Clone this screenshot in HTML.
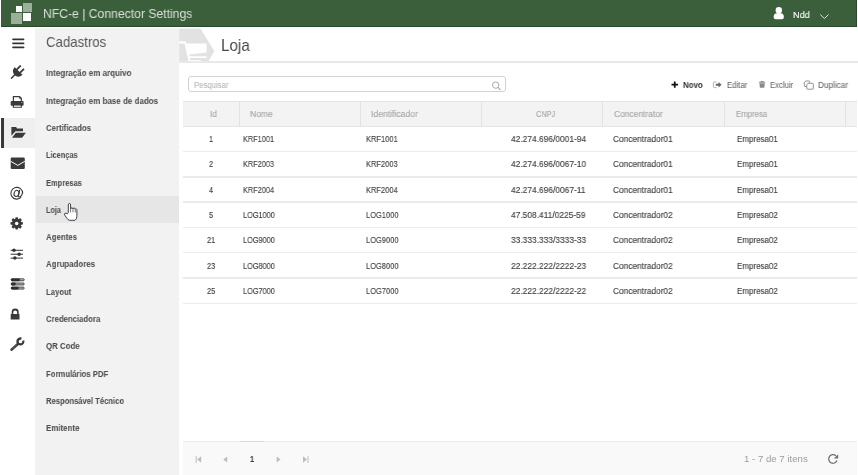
<!DOCTYPE html>
<html><head><meta charset="utf-8">
<style>
html,body{margin:0;padding:0;}
body{width:858px;height:475px;overflow:hidden;position:relative;background:#fff;font-family:"Liberation Sans",sans-serif;}
.a{position:absolute;}
.t{position:absolute;white-space:nowrap;transform-origin:0 0;will-change:transform;font-family:"Liberation Sans",sans-serif;}
svg{position:absolute;left:0;top:0;overflow:visible;}
</style></head><body>
<!-- header -->
<div class="a" style="left:1px;top:0;width:855px;height:26px;background:#3b5f3b;border-right:1px solid #2a4a2a;border-bottom:1px solid #27492a;"></div>
<div class="a" style="left:16px;top:6px;width:6px;height:6px;background:#fff;"></div>
<div class="a" style="left:23px;top:3px;width:9px;height:9px;background:#9bb09a;"></div>
<div class="a" style="left:11px;top:13px;width:11px;height:11px;background:#9bb09a;"></div>
<div class="a" style="left:23px;top:13px;width:8px;height:8px;background:#fff;"></div>

<!-- icon column / sidebar -->
<div class="a" style="left:35px;top:28px;width:144px;height:447px;background:#f2f2f2;"></div>
<div class="a" style="left:3.5px;top:118px;width:31.5px;height:30px;background:#efefef;"></div>
<div class="a" style="left:1px;top:118px;width:2.6px;height:30px;background:#3a3a3a;"></div>
<div class="a" style="left:36px;top:196px;width:142.8px;height:27px;background:#e6e6e6;"></div>

<!-- page header -->
<div class="a" style="left:179px;top:61.3px;width:679px;height:1.5px;background:#e8e8e8;"></div>

<!-- search -->
<div class="a" style="left:188px;top:76px;width:316px;height:14px;border:1px solid #d2d2d2;border-radius:3px;"></div>

<!-- table header -->
<div class="a" style="left:183px;top:101px;width:674px;height:24px;background:#f3f3f3;border-top:1px solid #e4e4e4;border-bottom:1px solid #e4e4e4;"></div>
<div class="a" style="left:238.5px;top:102px;width:1px;height:24px;background:#e2e2e2;"></div>
<div class="a" style="left:359.8px;top:102px;width:1px;height:24px;background:#e2e2e2;"></div>
<div class="a" style="left:481px;top:102px;width:1px;height:24px;background:#e2e2e2;"></div>
<div class="a" style="left:602.2px;top:102px;width:1px;height:24px;background:#e2e2e2;"></div>
<div class="a" style="left:724px;top:102px;width:1px;height:24px;background:#e2e2e2;"></div>
<div class="a" style="left:845.2px;top:102px;width:1px;height:24px;background:#e2e2e2;"></div>
<!-- row lines -->
<div class="a" style="left:183px;top:150.75px;width:674px;height:1.5px;background:#ebebeb;"></div>
<div class="a" style="left:183px;top:176.05px;width:674px;height:1.5px;background:#ebebeb;"></div>
<div class="a" style="left:183px;top:201.35px;width:674px;height:1.5px;background:#ebebeb;"></div>
<div class="a" style="left:183px;top:226.65px;width:674px;height:1.5px;background:#ebebeb;"></div>
<div class="a" style="left:183px;top:251.95px;width:674px;height:1.5px;background:#ebebeb;"></div>
<div class="a" style="left:183px;top:277.25px;width:674px;height:1.5px;background:#ebebeb;"></div>
<div class="a" style="left:183px;top:302.55px;width:674px;height:1.5px;background:#ebebeb;"></div>

<!-- footer -->
<div class="a" style="left:183px;top:440.7px;width:674px;height:35px;background:#f9f9f9;border-top:1px solid #ebebeb;"></div>
<div class="a" style="left:240px;top:440.7px;width:24px;height:1px;background:#e6d9a2;"></div>

<!--ICONS-->
<svg width="858" height="475" viewBox="0 0 858 475">
  <!-- page icon: hexagon with cart -->
  <polygon points="179.2,28.5 200.5,28.5 214.4,51.3 208.5,61 179.2,61" fill="#e2e2e2"/>
  <path d="M179.2,41.3 H185.6 L186.2,43.4 H206.6 V52.4 L189.2,54.6 L189.6,56.3 H206.6 V58.1 L189.9,58.1 L190.3,60.2 H201 V61.3 H188.6 L184.6,43.4 H179.2 Z" fill="#fff"/>
  <!-- user icon -->
  <circle cx="778.8" cy="10.3" r="3.2" fill="#fff"/>
  <path d="M773.7,17.5 V16.4 Q773.7,13 778.8,13 Q783.8,13 783.8,16.4 V17.5 Q783.8,19.3 782,19.3 H775.5 Q773.7,19.3 773.7,17.5 Z" fill="#fff"/>
  <path d="M820.3,14.6 L824.4,18.5 L828.5,14.6" stroke="#e8eee8" stroke-width="0.9" fill="none"/>

  <!-- hamburger -->
  <g fill="#333">
    <rect x="12.2" y="38.6" width="12.2" height="1.7" rx="0.8"/>
    <rect x="12.2" y="42.5" width="12.2" height="1.7" rx="0.8"/>
    <rect x="12.2" y="46.55" width="12.2" height="1.7" rx="0.8"/>
  </g>
  <!-- plug -->
  <g transform="translate(18.5,71.1) rotate(45)" fill="#3a3a3a">
    <path d="M-5.4,-0.2 H5.4 V0.6 A5.4,5 0 0 1 -5.4,0.6 Z"/>
    <rect x="-3.2" y="-5.6" width="1.8" height="5.8" rx="0.6"/>
    <rect x="1.4" y="-5.6" width="1.8" height="5.8" rx="0.6"/>
    <rect x="-0.75" y="4" width="1.5" height="6.6" rx="0.5"/>
  </g>
  <!-- printer -->
  <g fill="#3a3a3a">
    <path d="M12.8,96 H19.8 L21.9,98.1 V101.5 H20.7 V98.6 L19.3,97.2 H14 V101.5 H12.8 Z"/>
    <rect x="10.7" y="101" width="12.9" height="4.7" rx="1"/>
    <path d="M12.8,104 H21.9 V107.7 H12.8 Z M14,105.8 V106.6 H20.7 V105.8 Z" fill-rule="evenodd"/>
  </g>
  <rect x="14" y="105.6" width="6.7" height="1" fill="#fff"/>
  <path d="M19.3,96.5 L21.6,98.8 H19.3 Z" fill="#3a3a3a"/>
  <rect x="21.3" y="102" width="1" height="0.9" fill="#bbb"/>
  <!-- folder open -->
  <g fill="#3a3a3a">
    <path d="M11.4,127 H16.2 L17,128.6 H23 V131.2 H15.5 L11.4,135.7 Z"/>
    <path d="M15.8,132.8 H25.9 L22.1,137.8 H12 Z"/>
  </g>
  <!-- envelope -->
  <rect x="10.7" y="157.6" width="14.1" height="11.4" rx="1.2" fill="#3a3a3a"/>
  <path d="M10.7,161.3 L17.75,165.4 L24.8,161.3" stroke="#fff" stroke-width="1" fill="none"/>
  <!-- at -->
  <g fill="none" stroke="#3a3a3a">
    <path d="M21.2,197.2 A5.9,5.9 0 1 1 22.7,193.4" stroke-width="1.1"/>
    <path d="M19.7,189.8 L18.2,196.2 Q18.2,197 19.1,197 Q22,196.6 22.3,192.8" stroke-width="1.1"/>
    <ellipse cx="16.5" cy="193.4" rx="2.4" ry="3.1" transform="rotate(20 16.5 193.4)" stroke-width="1.1"/>
  </g>
  <!-- gear -->
  <g transform="translate(16.7,223.4)" fill="#3a3a3a">
    <circle r="4.7"/>
    <rect x="-1.4" y="-6.2" width="2.8" height="3" rx="0.8" transform="rotate(0)"/>
    <rect x="-1.4" y="-6.2" width="2.8" height="3" rx="0.8" transform="rotate(45)"/>
    <rect x="-1.4" y="-6.2" width="2.8" height="3" rx="0.8" transform="rotate(90)"/>
    <rect x="-1.4" y="-6.2" width="2.8" height="3" rx="0.8" transform="rotate(135)"/>
    <rect x="-1.4" y="-6.2" width="2.8" height="3" rx="0.8" transform="rotate(180)"/>
    <rect x="-1.4" y="-6.2" width="2.8" height="3" rx="0.8" transform="rotate(225)"/>
    <rect x="-1.4" y="-6.2" width="2.8" height="3" rx="0.8" transform="rotate(270)"/>
    <rect x="-1.4" y="-6.2" width="2.8" height="3" rx="0.8" transform="rotate(315)"/>
    <circle r="1.75" fill="#fff"/>
  </g>
  <!-- sliders -->
  <g fill="#333">
    <rect x="10.6" y="249.8" width="12.4" height="1"/>
    <rect x="10.6" y="253.7" width="12.4" height="1"/>
    <rect x="10.6" y="257.6" width="12.4" height="1"/>
    <circle cx="14" cy="250.3" r="1.75"/>
    <circle cx="19.1" cy="254.2" r="1.75"/>
    <circle cx="14.9" cy="258.1" r="1.75"/>
  </g>
  <!-- server / bars -->
  <g stroke="#333" stroke-width="0.9">
    <rect x="11.25" y="278.85" width="13" height="1.9" rx="0.95" fill="#c8c8c8"/>
    <rect x="11.25" y="283.05" width="13" height="1.9" rx="0.95" fill="#c8c8c8"/>
    <rect x="11.25" y="287.15" width="13" height="1.9" rx="0.95" fill="#c8c8c8"/>
  </g>
  <g fill="#2e2e2e">
    <rect x="10.8" y="278.4" width="9.2" height="2.8" rx="1.4"/>
    <rect x="10.8" y="282.6" width="5" height="2.8" rx="1.4"/>
    <rect x="10.8" y="286.7" width="8" height="2.8" rx="1.4"/>
  </g>
  <!-- lock -->
  <g fill="#3a3a3a">
    <rect x="10.7" y="313.9" width="8.8" height="5.5" rx="0.5"/>
    <path d="M11.7,314 V312.1 A3.5,3.5 0 0 1 18.7,312.1 V314 H17.1 V312.3 A1.9,1.9 0 0 0 13.3,312.3 V314 Z"/>
  </g>
  <!-- wrench -->
  <g fill="#3a3a3a">
    <path d="M11.6,349.6 L17.6,344.2" stroke="#3a3a3a" stroke-width="2.6" stroke-linecap="round"/>
    <path d="M24.3,340.3 A4.1,4.1 0 1 1 21.7,337.6 L21.1,340 A1.7,1.7 0 1 0 22,340.9 Z"/>
    <path d="M12.2,349 L16.8,344.9" stroke="#888" stroke-width="0.5"/>
  </g>
  <!-- hand cursor -->
  <path d="M68.3,212.6 V204.9 Q68.3,203.5 69.45,203.5 Q70.6,203.5 70.6,204.9 V208.9 Q70.9,207.8 71.9,207.8 Q72.9,207.8 73,209 Q73.3,208 74.3,208 Q75.2,208.1 75.3,209.3 Q75.6,208.7 76.2,208.8 Q76.9,209.1 76.9,210.6 V216.3 Q76.7,219.3 75,220.3 H69.2 Q68,219.8 66.6,217.9 L64.6,214.9 Q64,213.8 64.9,213.3 Q66,212.7 67.3,213.9 Z" fill="#fff" stroke="#2d2d3a" stroke-width="0.9" stroke-linejoin="round"/>
  <path d="M70.6,209 V212.4 M73,209.2 V212.4 M75.3,209.5 V212.4" stroke="#2d2d3a" stroke-width="0.65"/>

  <!-- search magnifier -->
  <circle cx="495.7" cy="85.1" r="3.2" fill="none" stroke="#aaa" stroke-width="1"/>
  <path d="M498,87.4 L500.6,90" stroke="#aaa" stroke-width="1.1"/>

  <!-- toolbar icons -->
  <path d="M671.5,84.65 H678 M674.75,81.6 V87.7" stroke="#111" stroke-width="1.75"/>
  <!-- edit (sign-out like) -->
  <path d="M716.5,82 H714.3 Q713.4,82 713.4,83 V86.6 Q713.4,87.6 714.3,87.6 H716.5" fill="none" stroke="#aaa" stroke-width="0.9"/>
  <path d="M715.8,83.8 H718.5 V82 L721.6,84.8 L718.5,87.6 V85.8 H715.8 Z" fill="#666"/>
  <!-- trash -->
  <path d="M758.8,82.3 H765.3 M760.8,82.3 V81.5 H763.3 V82.3" stroke="#888" stroke-width="0.9" fill="none"/>
  <path d="M759.4,83.3 H764.8 L764.3,87.8 H759.9 Z" fill="#8a8a8a"/>
  <!-- copy -->
  <path d="M806.5,86.5 H804.8 Q804.3,86.5 804.3,86 V82.3 L805.8,81 H809 Q809.6,81 809.6,81.6 V82.8" fill="none" stroke="#888" stroke-width="0.9"/>
  <path d="M807.8,83.3 H812.8 Q813.3,83.3 813.3,83.8 V88.7 Q813.3,89.2 812.8,89.2 H807.3 Q806.8,89.2 806.8,88.7 V84.5 Z" fill="none" stroke="#888" stroke-width="0.9"/>

  <!-- pager -->
  <g fill="#bdbdbd">
    <rect x="195.7" y="456.1" width="1" height="6.9"/>
    <path d="M201.2,456.3 V462.8 L197.2,459.55 Z"/>
    <path d="M227.2,456.5 V462.6 L223.2,459.55 Z"/>
    <path d="M276.7,456.5 V462.6 L280.6,459.55 Z"/>
    <path d="M303,456.3 V462.8 L307,459.55 Z"/>
    <rect x="307.5" y="456.1" width="1" height="6.9"/>
  </g>
  <!-- refresh -->
  <path d="M837,460.5 A4.3,4.3 0 1 1 836,455.9" fill="none" stroke="#707070" stroke-width="1.3"/>
  <path d="M838.2,454.2 V458.6 H833.8 Z" fill="#707070"/>
</svg>

<span class="t" style="left:42.55px;top:7.92px;font-size:12.8px;line-height:12.8px;font-weight:400;color:#d8e1d8;-webkit-text-stroke:0px #d8e1d8;transform:scaleX(0.9515)">NFC-e | Connector Settings</span>
<span class="t" style="left:793.40px;top:11.12px;font-size:9.2px;line-height:9.2px;font-weight:400;color:#f4f6f4;-webkit-text-stroke:0.15px #f4f6f4;transform:scaleX(0.9914)">Ndd</span>
<span class="t" style="left:45.90px;top:34.81px;font-size:14.2px;line-height:14.2px;font-weight:400;color:#575757;-webkit-text-stroke:0px #575757;transform:scaleX(0.9308)">Cadastros</span>
<span class="t" style="left:45.80px;top:68.31px;font-size:9.4px;line-height:9.4px;font-weight:700;color:#505050;-webkit-text-stroke:0.05px #505050;transform:scaleX(0.8544)">Integração em arquivo</span>
<span class="t" style="left:45.80px;top:95.62px;font-size:9.4px;line-height:9.4px;font-weight:700;color:#505050;-webkit-text-stroke:0.05px #505050;transform:scaleX(0.8537)">Integração em base de dados</span>
<span class="t" style="left:45.80px;top:122.91px;font-size:9.4px;line-height:9.4px;font-weight:700;color:#505050;-webkit-text-stroke:0.05px #505050;transform:scaleX(0.8301)">Certificados</span>
<span class="t" style="left:45.80px;top:150.21px;font-size:9.4px;line-height:9.4px;font-weight:700;color:#505050;-webkit-text-stroke:0.05px #505050;transform:scaleX(0.7867)">Licenças</span>
<span class="t" style="left:45.80px;top:177.51px;font-size:9.4px;line-height:9.4px;font-weight:700;color:#505050;-webkit-text-stroke:0.05px #505050;transform:scaleX(0.8026)">Empresas</span>
<span class="t" style="left:45.80px;top:204.81px;font-size:9.4px;line-height:9.4px;font-weight:700;color:#505050;-webkit-text-stroke:0.05px #505050;transform:scaleX(0.7728)">Loja</span>
<span class="t" style="left:45.80px;top:232.12px;font-size:9.4px;line-height:9.4px;font-weight:700;color:#505050;-webkit-text-stroke:0.05px #505050;transform:scaleX(0.8403)">Agentes</span>
<span class="t" style="left:45.80px;top:259.41px;font-size:9.4px;line-height:9.4px;font-weight:700;color:#505050;-webkit-text-stroke:0.05px #505050;transform:scaleX(0.8395)">Agrupadores</span>
<span class="t" style="left:45.80px;top:286.71px;font-size:9.4px;line-height:9.4px;font-weight:700;color:#505050;-webkit-text-stroke:0.05px #505050;transform:scaleX(0.8233)">Layout</span>
<span class="t" style="left:45.80px;top:314.01px;font-size:9.4px;line-height:9.4px;font-weight:700;color:#505050;-webkit-text-stroke:0.05px #505050;transform:scaleX(0.8264)">Credenciadora</span>
<span class="t" style="left:45.80px;top:341.31px;font-size:9.4px;line-height:9.4px;font-weight:700;color:#505050;-webkit-text-stroke:0.05px #505050;transform:scaleX(0.8373)">QR Code</span>
<span class="t" style="left:45.80px;top:368.62px;font-size:9.4px;line-height:9.4px;font-weight:700;color:#505050;-webkit-text-stroke:0.05px #505050;transform:scaleX(0.8232)">Formulários PDF</span>
<span class="t" style="left:45.80px;top:395.91px;font-size:9.4px;line-height:9.4px;font-weight:700;color:#505050;-webkit-text-stroke:0.05px #505050;transform:scaleX(0.8134)">Responsável Técnico</span>
<span class="t" style="left:45.80px;top:423.21px;font-size:9.4px;line-height:9.4px;font-weight:700;color:#505050;-webkit-text-stroke:0.05px #505050;transform:scaleX(0.8431)">Emitente</span>
<span class="t" style="left:221.48px;top:37.80px;font-size:16.6px;line-height:16.6px;font-weight:400;color:#474747;-webkit-text-stroke:0px #474747;transform:scaleX(0.9151)">Loja</span>
<span class="t" style="left:194.10px;top:80.72px;font-size:8.3px;line-height:8.3px;font-weight:400;color:#bbb;-webkit-text-stroke:0.15px #bbb;transform:scaleX(0.9318)">Pesquisar</span>
<span class="t" style="left:683.20px;top:80.71px;font-size:8.4px;line-height:8.4px;font-weight:700;color:#333;-webkit-text-stroke:0px #333;transform:scaleX(0.9461)">Novo</span>
<span class="t" style="left:726.80px;top:80.71px;font-size:8.4px;line-height:8.4px;font-weight:400;color:#666;-webkit-text-stroke:0.05px #666;transform:scaleX(0.9235)">Editar</span>
<span class="t" style="left:769.90px;top:80.71px;font-size:8.4px;line-height:8.4px;font-weight:400;color:#666;-webkit-text-stroke:0.05px #666;transform:scaleX(0.9195)">Excluir</span>
<span class="t" style="left:818.00px;top:80.71px;font-size:8.4px;line-height:8.4px;font-weight:400;color:#666;-webkit-text-stroke:0.05px #666;transform:scaleX(0.9764)">Duplicar</span>
<span class="t" style="left:210.20px;top:109.80px;font-size:8.9px;line-height:8.9px;font-weight:400;color:#a8a8a8;-webkit-text-stroke:0.15px #a8a8a8;transform:scaleX(0.9242)">Id</span>
<span class="t" style="left:250.20px;top:109.80px;font-size:8.9px;line-height:8.9px;font-weight:400;color:#a8a8a8;-webkit-text-stroke:0.15px #a8a8a8;transform:scaleX(0.9605)">Nome</span>
<span class="t" style="left:371.40px;top:109.80px;font-size:8.9px;line-height:8.9px;font-weight:400;color:#a8a8a8;-webkit-text-stroke:0.15px #a8a8a8;transform:scaleX(0.9691)">Identificador</span>
<span class="t" style="left:535.60px;top:109.80px;font-size:8.9px;line-height:8.9px;font-weight:400;color:#a8a8a8;-webkit-text-stroke:0.15px #a8a8a8;transform:scaleX(0.8312)">CNPJ</span>
<span class="t" style="left:614.00px;top:109.80px;font-size:8.9px;line-height:8.9px;font-weight:400;color:#a8a8a8;-webkit-text-stroke:0.15px #a8a8a8;transform:scaleX(0.9504)">Concentrator</span>
<span class="t" style="left:736.00px;top:109.80px;font-size:8.9px;line-height:8.9px;font-weight:400;color:#a8a8a8;-webkit-text-stroke:0.15px #a8a8a8;transform:scaleX(0.8770)">Empresa</span>
<span class="t" style="left:249.80px;top:454.41px;font-size:9.4px;line-height:9.4px;font-weight:700;color:#444;-webkit-text-stroke:0.15px #444;transform:scaleX(0.8000)">1</span>
<span class="t" style="left:743.80px;top:454.12px;font-size:9.4px;line-height:9.4px;font-weight:400;color:#9c9c9c;-webkit-text-stroke:0px #9c9c9c;transform:scaleX(1.0284)">1 - 7 de 7 itens</span>
<span class="t" style="left:208.75px;top:134.01px;font-size:9.4px;line-height:9.4px;font-weight:400;color:#444;-webkit-text-stroke:0.15px #444;transform:scaleX(0.7819)">1</span>
<span class="t" style="left:242.70px;top:134.01px;font-size:9.4px;line-height:9.4px;font-weight:400;color:#444;-webkit-text-stroke:0.15px #444;transform:scaleX(0.7819)">KRF1001</span>
<span class="t" style="left:366.00px;top:134.01px;font-size:9.4px;line-height:9.4px;font-weight:400;color:#444;-webkit-text-stroke:0.15px #444;transform:scaleX(0.7997)">KRF1001</span>
<span class="t" style="left:510.80px;top:134.01px;font-size:9.4px;line-height:9.4px;font-weight:400;color:#444;-webkit-text-stroke:0.15px #444;transform:scaleX(0.8947)">42.274.696/0001-94</span>
<span class="t" style="left:613.00px;top:134.01px;font-size:9.4px;line-height:9.4px;font-weight:400;color:#444;-webkit-text-stroke:0.15px #444;transform:scaleX(0.8878)">Concentrador01</span>
<span class="t" style="left:736.80px;top:134.01px;font-size:9.4px;line-height:9.4px;font-weight:400;color:#444;-webkit-text-stroke:0.15px #444;transform:scaleX(0.8507)">Empresa01</span>
<span class="t" style="left:208.75px;top:159.31px;font-size:9.4px;line-height:9.4px;font-weight:400;color:#444;-webkit-text-stroke:0.15px #444;transform:scaleX(0.7819)">2</span>
<span class="t" style="left:242.70px;top:159.31px;font-size:9.4px;line-height:9.4px;font-weight:400;color:#444;-webkit-text-stroke:0.15px #444;transform:scaleX(0.7819)">KRF2003</span>
<span class="t" style="left:366.00px;top:159.31px;font-size:9.4px;line-height:9.4px;font-weight:400;color:#444;-webkit-text-stroke:0.15px #444;transform:scaleX(0.7997)">KRF2003</span>
<span class="t" style="left:510.80px;top:159.31px;font-size:9.4px;line-height:9.4px;font-weight:400;color:#444;-webkit-text-stroke:0.15px #444;transform:scaleX(0.8947)">42.274.696/0067-10</span>
<span class="t" style="left:613.00px;top:159.31px;font-size:9.4px;line-height:9.4px;font-weight:400;color:#444;-webkit-text-stroke:0.15px #444;transform:scaleX(0.8878)">Concentrador01</span>
<span class="t" style="left:736.80px;top:159.31px;font-size:9.4px;line-height:9.4px;font-weight:400;color:#444;-webkit-text-stroke:0.15px #444;transform:scaleX(0.8507)">Empresa01</span>
<span class="t" style="left:208.75px;top:184.62px;font-size:9.4px;line-height:9.4px;font-weight:400;color:#444;-webkit-text-stroke:0.15px #444;transform:scaleX(0.7819)">4</span>
<span class="t" style="left:242.70px;top:184.62px;font-size:9.4px;line-height:9.4px;font-weight:400;color:#444;-webkit-text-stroke:0.15px #444;transform:scaleX(0.7819)">KRF2004</span>
<span class="t" style="left:366.00px;top:184.62px;font-size:9.4px;line-height:9.4px;font-weight:400;color:#444;-webkit-text-stroke:0.15px #444;transform:scaleX(0.7997)">KRF2004</span>
<span class="t" style="left:511.11px;top:184.62px;font-size:9.4px;line-height:9.4px;font-weight:400;color:#444;-webkit-text-stroke:0.15px #444;transform:scaleX(0.8947)">42.274.696/0067-11</span>
<span class="t" style="left:613.00px;top:184.62px;font-size:9.4px;line-height:9.4px;font-weight:400;color:#444;-webkit-text-stroke:0.15px #444;transform:scaleX(0.8878)">Concentrador01</span>
<span class="t" style="left:736.80px;top:184.62px;font-size:9.4px;line-height:9.4px;font-weight:400;color:#444;-webkit-text-stroke:0.15px #444;transform:scaleX(0.8507)">Empresa01</span>
<span class="t" style="left:208.75px;top:209.91px;font-size:9.4px;line-height:9.4px;font-weight:400;color:#444;-webkit-text-stroke:0.15px #444;transform:scaleX(0.7819)">5</span>
<span class="t" style="left:242.70px;top:209.91px;font-size:9.4px;line-height:9.4px;font-weight:400;color:#444;-webkit-text-stroke:0.15px #444;transform:scaleX(0.7819)">LOG1000</span>
<span class="t" style="left:366.00px;top:209.91px;font-size:9.4px;line-height:9.4px;font-weight:400;color:#444;-webkit-text-stroke:0.15px #444;transform:scaleX(0.7997)">LOG1000</span>
<span class="t" style="left:511.11px;top:209.91px;font-size:9.4px;line-height:9.4px;font-weight:400;color:#444;-webkit-text-stroke:0.15px #444;transform:scaleX(0.8947)">47.508.411/0225-59</span>
<span class="t" style="left:613.00px;top:209.91px;font-size:9.4px;line-height:9.4px;font-weight:400;color:#444;-webkit-text-stroke:0.15px #444;transform:scaleX(0.8878)">Concentrador02</span>
<span class="t" style="left:736.80px;top:209.91px;font-size:9.4px;line-height:9.4px;font-weight:400;color:#444;-webkit-text-stroke:0.15px #444;transform:scaleX(0.8507)">Empresa02</span>
<span class="t" style="left:206.71px;top:235.21px;font-size:9.4px;line-height:9.4px;font-weight:400;color:#444;-webkit-text-stroke:0.15px #444;transform:scaleX(0.7819)">21</span>
<span class="t" style="left:242.70px;top:235.21px;font-size:9.4px;line-height:9.4px;font-weight:400;color:#444;-webkit-text-stroke:0.15px #444;transform:scaleX(0.7819)">LOG9000</span>
<span class="t" style="left:366.00px;top:235.21px;font-size:9.4px;line-height:9.4px;font-weight:400;color:#444;-webkit-text-stroke:0.15px #444;transform:scaleX(0.7997)">LOG9000</span>
<span class="t" style="left:510.80px;top:235.21px;font-size:9.4px;line-height:9.4px;font-weight:400;color:#444;-webkit-text-stroke:0.15px #444;transform:scaleX(0.8947)">33.333.333/3333-33</span>
<span class="t" style="left:613.00px;top:235.21px;font-size:9.4px;line-height:9.4px;font-weight:400;color:#444;-webkit-text-stroke:0.15px #444;transform:scaleX(0.8878)">Concentrador02</span>
<span class="t" style="left:736.80px;top:235.21px;font-size:9.4px;line-height:9.4px;font-weight:400;color:#444;-webkit-text-stroke:0.15px #444;transform:scaleX(0.8507)">Empresa02</span>
<span class="t" style="left:206.71px;top:260.51px;font-size:9.4px;line-height:9.4px;font-weight:400;color:#444;-webkit-text-stroke:0.15px #444;transform:scaleX(0.7819)">23</span>
<span class="t" style="left:242.70px;top:260.51px;font-size:9.4px;line-height:9.4px;font-weight:400;color:#444;-webkit-text-stroke:0.15px #444;transform:scaleX(0.7819)">LOG8000</span>
<span class="t" style="left:366.00px;top:260.51px;font-size:9.4px;line-height:9.4px;font-weight:400;color:#444;-webkit-text-stroke:0.15px #444;transform:scaleX(0.7997)">LOG8000</span>
<span class="t" style="left:510.80px;top:260.51px;font-size:9.4px;line-height:9.4px;font-weight:400;color:#444;-webkit-text-stroke:0.15px #444;transform:scaleX(0.8947)">22.222.222/2222-23</span>
<span class="t" style="left:613.00px;top:260.51px;font-size:9.4px;line-height:9.4px;font-weight:400;color:#444;-webkit-text-stroke:0.15px #444;transform:scaleX(0.8878)">Concentrador02</span>
<span class="t" style="left:736.80px;top:260.51px;font-size:9.4px;line-height:9.4px;font-weight:400;color:#444;-webkit-text-stroke:0.15px #444;transform:scaleX(0.8507)">Empresa02</span>
<span class="t" style="left:206.71px;top:285.81px;font-size:9.4px;line-height:9.4px;font-weight:400;color:#444;-webkit-text-stroke:0.15px #444;transform:scaleX(0.7819)">25</span>
<span class="t" style="left:242.70px;top:285.81px;font-size:9.4px;line-height:9.4px;font-weight:400;color:#444;-webkit-text-stroke:0.15px #444;transform:scaleX(0.7819)">LOG7000</span>
<span class="t" style="left:366.00px;top:285.81px;font-size:9.4px;line-height:9.4px;font-weight:400;color:#444;-webkit-text-stroke:0.15px #444;transform:scaleX(0.7997)">LOG7000</span>
<span class="t" style="left:510.80px;top:285.81px;font-size:9.4px;line-height:9.4px;font-weight:400;color:#444;-webkit-text-stroke:0.15px #444;transform:scaleX(0.8947)">22.222.222/2222-22</span>
<span class="t" style="left:613.00px;top:285.81px;font-size:9.4px;line-height:9.4px;font-weight:400;color:#444;-webkit-text-stroke:0.15px #444;transform:scaleX(0.8878)">Concentrador02</span>
<span class="t" style="left:736.80px;top:285.81px;font-size:9.4px;line-height:9.4px;font-weight:400;color:#444;-webkit-text-stroke:0.15px #444;transform:scaleX(0.8507)">Empresa02</span>
</body></html>
